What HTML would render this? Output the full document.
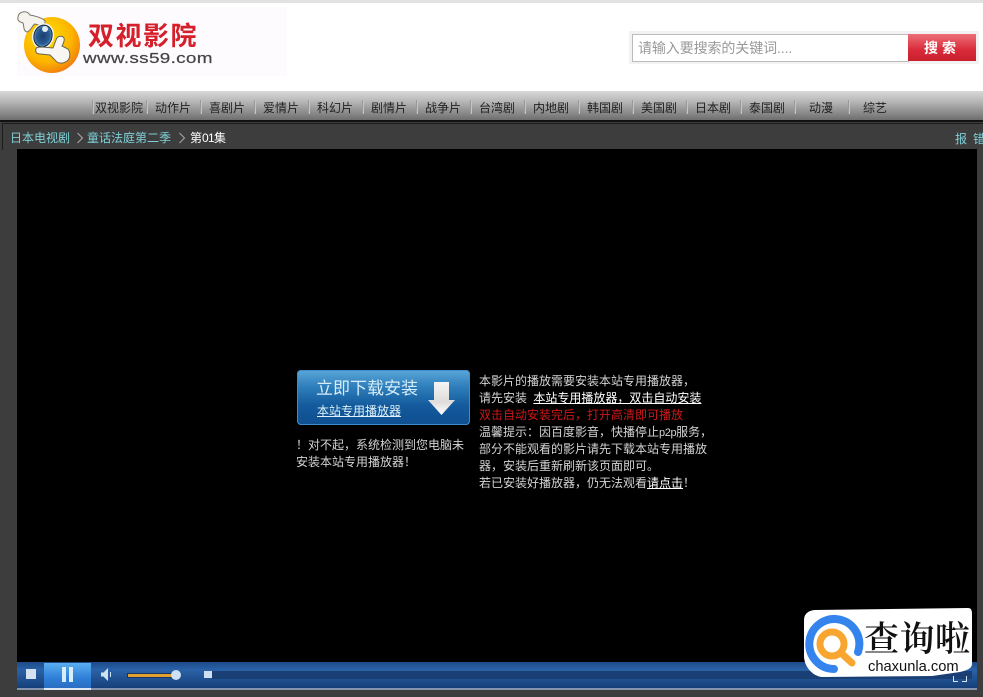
<!DOCTYPE html>
<html lang="zh"><head><meta charset="utf-8"><title>双视影院</title>
<style>
html,body{margin:0;padding:0;background:#fff}
#p{position:relative;width:983px;height:697px;overflow:hidden;background:#fff;font-family:"Liberation Sans","WenQuanYi Zen Hei","Noto Sans CJK SC",sans-serif;font-size:12px}
.a{position:absolute;white-space:nowrap}
.n{position:absolute;top:100px;width:54px;text-align:center;color:#222;font-size:12px;line-height:16px}
.s{position:absolute;top:100px;width:1px;height:14px;background:#999;box-shadow:1px 0 0 #c4c4c4}
.t{position:absolute;left:479px;color:#d4d4d4;font-size:12px;line-height:17px;white-space:nowrap}
u{text-underline-offset:1px}
</style></head><body><div id="p">
<div class="a" style="left:0;top:0;width:983px;height:3px;background:#e2e2e2"></div>
<div class="a" style="left:17px;top:7px;width:270px;height:69px;background:#fdfbfd"></div>
<svg class="a" style="left:15px;top:7px" width="70" height="68" viewBox="0 0 70 68">
<defs><radialGradient id="g" cx=".4" cy=".35" r=".7"><stop offset="0" stop-color="#ffe000"/><stop offset=".65" stop-color="#fcb400"/><stop offset="1" stop-color="#f07a10"/></radialGradient>
<radialGradient id="e" cx=".5" cy=".5" r=".55"><stop offset="0" stop-color="#1c3d6c"/><stop offset=".7" stop-color="#2a5f98"/><stop offset="1" stop-color="#8fbcd8"/></radialGradient></defs>
<circle cx="37" cy="38" r="28" fill="url(#g)"/>
<path d="M3 10C4 4 12 3 15 8C20 9 28 11 30 14C31 18 25 19 20 17C17 18 17 23 12 25C8 24 9 18 8 16C5 15 2 14 3 10Z" fill="#f6f2ee" stroke="#776" stroke-width="1"/>
<ellipse cx="28" cy="29" rx="11" ry="13" transform="rotate(15 28 29)" fill="#f3f3f3"/>
<ellipse cx="28" cy="29" rx="9" ry="11" transform="rotate(15 28 29)" fill="url(#e)" stroke="#123" stroke-width="1"/>
<circle cx="30" cy="22" r="3" fill="#dfeaf5"/>
<path d="M21 42C21 40 24 40 27 40L38 41L41 33C42 29 47 28 49 31C50 34 48 37 47 39L53 42C56 46 55 52 52 54C48 57 43 57 40 53L35 48L25 47C21 47 20 44 21 42Z" fill="#f8f6f2" stroke="#665" stroke-width="1"/>
</svg>
<div class="a" style="left:88px;top:19px;font-size:26px;line-height:31px;font-weight:bold;color:#d5202c;letter-spacing:1.500px;font-family:'Noto Sans CJK SC',sans-serif">双视影院</div>
<div class="a" style="left:83px;top:50px;font-size:15px;line-height:17px;color:#444;letter-spacing:.25px;transform:scaleX(1.26);transform-origin:0 0;-webkit-text-stroke:.2px #444">www.ss59.com</div>

<div class="a" style="left:629px;top:31px;width:350px;height:33px;background:#f4f1f2"></div>
<div class="a" style="left:632px;top:34px;width:275px;height:26px;background:#fff;border:1px solid #bbb"></div>
<div class="a" style="left:638px;top:40px;font-size:14px;line-height:16px;color:#999;letter-spacing:-.1px">请输入要搜索的关键词....</div>
<div class="a" style="left:908px;top:34px;width:68px;height:27px;background:linear-gradient(#ed6f78,#d92a38 60%,#c8202e);color:#fff;font-weight:bold;font-size:14px;line-height:28px;text-align:center;letter-spacing:4px">搜索</div>

<div class="a" style="left:0;top:91px;width:983px;height:29px;background:linear-gradient(#d8d8d8,#b8b8b8 35%,#6e6e6e)"></div>
<div class="s" style="left:92px"></div><div class="s" style="left:146px"></div><div class="s" style="left:200px"></div><div class="s" style="left:254px"></div><div class="s" style="left:308px"></div><div class="s" style="left:362px"></div><div class="s" style="left:416px"></div><div class="s" style="left:470px"></div><div class="s" style="left:524px"></div><div class="s" style="left:578px"></div><div class="s" style="left:632px"></div><div class="s" style="left:686px"></div><div class="s" style="left:740px"></div><div class="s" style="left:794px"></div><div class="s" style="left:848px"></div>
<div class="n" style="left:92px">双视影院</div><div class="n" style="left:146px">动作片</div><div class="n" style="left:200px">喜剧片</div><div class="n" style="left:254px">爱情片</div><div class="n" style="left:308px">科幻片</div><div class="n" style="left:362px">剧情片</div><div class="n" style="left:416px">战争片</div><div class="n" style="left:470px">台湾剧</div><div class="n" style="left:524px">内地剧</div><div class="n" style="left:578px">韩国剧</div><div class="n" style="left:632px">美国剧</div><div class="n" style="left:686px">日本剧</div><div class="n" style="left:740px">泰国剧</div><div class="n" style="left:794px">动漫</div><div class="n" style="left:848px">综艺</div>

<div class="a" style="left:0;top:120px;width:983px;height:577px;background:#3d3d3d"></div>
<div class="a" style="left:0;top:120px;width:983px;height:2px;background:#111"></div>
<div class="a" style="left:2px;top:123px;width:981px;height:1px;background:#1c1c1c"></div>
<div class="a" style="left:2px;top:123px;width:1px;height:27px;background:#1c1c1c"></div>
<div class="a" style="left:10px;top:130px;line-height:16px;color:#7fd0d8">日本电视剧</div>
<svg class="a" style="left:76px;top:132px" width="8" height="12" viewBox="0 0 8 12"><path d="M1.500 1L6.500 6L1.500 11" fill="none" stroke="#aaa" stroke-width="1"/></svg>
<div class="a" style="left:87px;top:130px;line-height:16px;color:#7fd0d8">童话法庭第二季</div>
<svg class="a" style="left:178px;top:132px" width="8" height="12" viewBox="0 0 8 12"><path d="M1.500 1L6.500 6L1.500 11" fill="none" stroke="#aaa" stroke-width="1"/></svg>
<div class="a" style="left:190px;top:130px;line-height:16px;color:#fff">第<span style="letter-spacing:-.7px">01</span>集</div>
<div class="a" style="left:955px;top:131px;line-height:16px;color:#7fd0d8;letter-spacing:6px">报错</div>

<div class="a" style="left:17px;top:149px;width:960px;height:513px;background:#000"></div>
<div class="a" style="left:297px;top:370px;width:173px;height:55px;border-radius:4px;background:linear-gradient(#5aa6d8,#2f7fbc 30%,#135a9c 65%,#0f4f90);box-shadow:inset 0 0 0 1px #3e8ccb"></div>
<div class="a" style="left:316px;top:377px;font-size:17px;line-height:24px;color:#d6edf8">立即下载安装</div>
<div class="a" style="left:317px;top:403px;font-size:12px;line-height:16px;color:#dff2fb"><u>本站专用播放器</u></div>
<svg class="a" style="left:428px;top:382px" width="28" height="34" viewBox="0 0 28 34"><defs><linearGradient id="ar" x1="0" y1="0" x2="0" y2="1"><stop offset="0" stop-color="#f5f5f5"/><stop offset=".6" stop-color="#e0dcdc"/><stop offset="1" stop-color="#fff"/></linearGradient></defs><path d="M6 0H21V18H27L13.500 33L0 18H6Z" fill="url(#ar)"/></svg>
<div class="a" style="left:296px;top:437px;line-height:17px;color:#d4d4d4">！对不起，系统检测到您电脑未<br>安装本站专用播放器！</div>
<div class="t" style="top:373px">本影片的播放需要安装本站专用播放器，</div>
<div class="t" style="top:390px">请先安装 <u style="color:#fff;margin-left:3px">本站专用播放器，双击自动安装</u></div>
<div class="t" style="top:407px;color:#cc1818">双击自动安装完后，打开高清即可播放</div>
<div class="t" style="top:424px">温馨提示：因百度影音，快播停止<span style="font-size:11px;letter-spacing:-.4px">p2p</span>服务，</div>
<div class="t" style="top:441px">部分不能观看的影片请先下载本站专用播放</div>
<div class="t" style="top:458px">器，安装后重新刷新该页面即可。</div>
<div class="t" style="top:475px">若已安装好播放器，仍无法观看<u style="color:#fff">请点击</u>！</div>

<div class="a" style="left:17px;top:662px;width:960px;height:26px;background:linear-gradient(#1d4a88,#2a62a8 30%,#153f78)"></div>
<div class="a" style="left:17px;top:688px;width:960px;height:2px;background:#8494ac"></div>
<div class="a" style="left:44px;top:663px;width:47px;height:25px;background:linear-gradient(#5aaef0,#2f7fd8 60%,#2a6ec0)"></div>
<div class="a" style="left:44px;top:688px;width:47px;height:2px;background:#dfe8f2"></div>
<div class="a" style="left:26px;top:669px;width:10px;height:10px;background:#d5e2f0"></div>
<div class="a" style="left:62px;top:667px;width:4px;height:15px;background:#d8ecfa"></div>
<div class="a" style="left:69px;top:667px;width:4px;height:15px;background:#d8ecfa"></div>
<svg class="a" style="left:100px;top:667px" width="13" height="15" viewBox="0 0 13 15"><path d="M1 5.500H3.500L8 1V14L3.500 9.500H1Z" fill="#cfe0f0"/><path d="M10.500 5V10" stroke="#cfe0f0" stroke-width="1"/></svg>
<div class="a" style="left:127px;top:673px;width:45px;height:3px;background:#e0a030;border:1px solid #16345f"></div>
<div class="a" style="left:171px;top:670px;width:10px;height:10px;border-radius:50%;background:#cfe0f2"></div>
<div class="a" style="left:212px;top:671px;width:760px;height:8px;background:#1a3f74"></div>
<div class="a" style="left:204px;top:671px;width:8px;height:7px;background:#cfe0f2"></div>

<svg class="a" style="left:953px;top:672px" width="14" height="10" viewBox="0 0 14 10"><path d="M.500 4V9.500H5M13.500 4V9.500H9" fill="none" stroke="#d5e4f4" stroke-width="1"/></svg>
<svg class="a" style="left:802px;top:606px" width="172" height="74" viewBox="0 0 172 74"><path d="M12 4L166 2C169 2 170 4 170 8V58C170 62 166 64 158 66L130 70L20 71C10 70 2 60 2 50V14C2 8 6 5 12 4Z" fill="#fff"/>
<path d="M56 46A25 25 0 1 0 32 63" fill="none" stroke="#3584ee" stroke-width="8" stroke-linecap="round"/>
<circle cx="30" cy="38" r="12" fill="none" stroke="#f8a62f" stroke-width="7"/><path d="M39 47L50 57" stroke="#f8a62f" stroke-width="7" stroke-linecap="round"/></svg>
<div class="a" style="left:864px;top:614px;font-size:35px;line-height:46px;color:#111;letter-spacing:.5px;font-family:'Noto Serif CJK SC',serif;font-weight:600">查询啦</div>
<div class="a" style="left:868px;top:658px;font-size:14.700px;line-height:19px;color:#111">chaxunla.com</div>
</div></body></html>
